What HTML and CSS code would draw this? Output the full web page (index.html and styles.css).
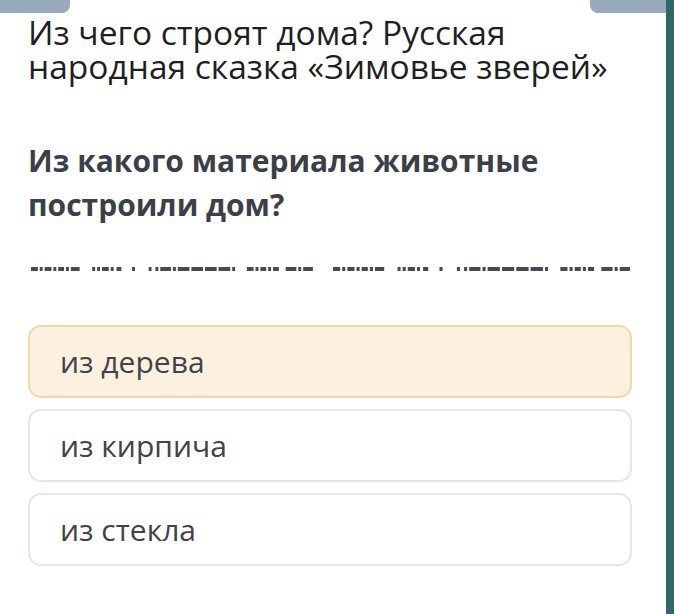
FILE: index.html
```html
<!DOCTYPE html>
<html lang="ru">
<head>
    <meta charset="UTF-8">
    <meta name="viewport" content="width=device-width, initial-scale=1.0">
    <title>Зимовье зверей</title>
    <link rel="stylesheet" href="styles.css">
</head>
<body>

    <div class="ekran">
        <div class="stranica">
            <div class="verh">
                <div class="vkladka levaya"></div>
                <div class="vkladka pravaya"></div>
            </div>

            <h1 class="zagolovok">Из чего строят дома? Русская народная сказка «Зимовье зверей»</h1>

            <h2 class="vopros">Из какого материала животные построили дом?</h2>

            <svg class="propusk" width="604" height="4" viewBox="0 0 604 4">
                <defs>
                    <g id="kusok">
                        <rect x="0" width="7" height="4"/>
                        <rect x="9" width="3" height="4"/>
                        <rect x="14" width="7" height="4"/>
                        <rect x="23" width="3" height="4"/>
                        <rect x="28" width="6" height="4"/>
                        <rect x="36" width="3" height="4"/>
                        <rect x="41" width="9" height="4"/>
                        <rect x="63" width="3" height="4"/>
                        <rect x="68" width="3" height="4"/>
                        <rect x="73" width="7" height="4"/>
                        <rect x="82" width="3" height="4"/>
                        <rect x="88" width="5" height="4"/>
                        <rect x="104" width="3" height="4"/>
                        <rect x="121" width="3" height="4"/>
                        <rect x="128" width="3" height="4"/>
                        <rect x="133" width="11" height="4"/>
                        <rect x="146" width="3" height="4"/>
                        <rect x="151" width="12" height="4"/>
                        <rect x="165" width="12" height="4"/>
                        <rect x="179" width="12" height="4"/>
                        <rect x="193" width="12" height="4"/>
                        <rect x="207" width="3" height="4"/>
                        <rect x="222" width="7" height="4"/>
                        <rect x="231" width="3" height="4"/>
                        <rect x="236" width="6" height="4"/>
                        <rect x="244" width="3" height="4"/>
                        <rect x="249" width="6" height="4"/>
                        <rect x="262" width="11" height="4"/>
                        <rect x="275" width="3" height="4"/>
                        <rect x="280" width="10" height="4"/>
                    </g>
                </defs>
                <use href="#kusok" transform="translate(3 0) scale(0.972 1)"/>
                <use href="#kusok" transform="translate(305 0) scale(1.024 1)"/>
            </svg>

            <div class="otvety">
                <div class="otvet vybran">из дерева</div>
                <div class="otvet">из кирпича</div>
                <div class="otvet">из стекла</div>
            </div>
        </div>
        <div class="polosa"></div>
    </div>

</body>
</html>
```

FILE: styles.css
```css
body {
    margin: 0;
    font-family: "Open Sans", "Noto Sans", sans-serif;
    background-color: #fff;
}

.ekran {
    display: flex;
    height: 614px;
    overflow: hidden;
}

.stranica {
    width: 666px;
    background-color: #fff;
}

.polosa {
    width: 8px;
    background-color: #2f6869;
}

.verh {
    display: flex;
    justify-content: space-between;
    height: 13px;
}

.vkladka {
    background-color: #97abba;
}

.vkladka.levaya {
    width: 70px;
    border-bottom-right-radius: 8px;
}

.vkladka.pravaya {
    width: 76px;
    border-bottom-left-radius: 8px;
}

.zagolovok {
    margin: 2px 0 0 28px;
    width: 610px;
    font-size: 33.5px;
    line-height: 34px;
    font-weight: 400;
    color: #1e1f22;
}

.vopros {
    margin: 56px 0 0 28px;
    width: 580px;
    font-size: 30px;
    line-height: 44px;
    font-weight: 700;
    color: #3b3f47;
}

.propusk {
    display: block;
    margin: 40px 0 0 28px;
    fill: #474a52;
}

.otvety {
    display: flex;
    flex-direction: column;
    gap: 11px;
    margin: 54px 0 0 28px;
    width: 604px;
}

.otvet {
    box-sizing: border-box;
    height: 73px;
    padding-left: 30px;
    display: flex;
    align-items: center;
    font-size: 30px;
    color: #404348;
    background-color: #fff;
    border: 2px solid #e4e7e9;
    border-radius: 13px;
}

.otvet.vybran {
    background-color: #fcf1de;
    border-color: #efd8aa;
}
```
